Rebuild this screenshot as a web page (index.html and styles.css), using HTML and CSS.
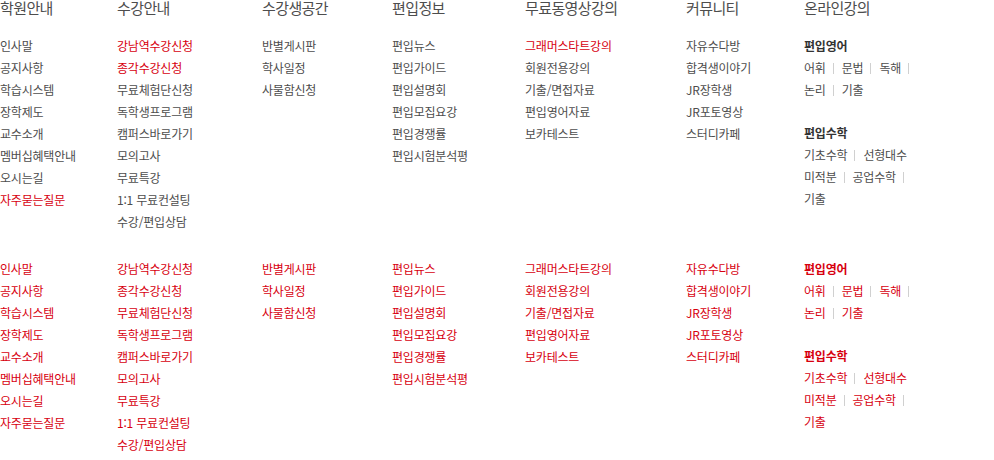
FILE: index.html
```html
<!DOCTYPE html>
<html lang="ko">
<head>
<meta charset="utf-8">
<link rel="stylesheet" href="styles.css">
</head>
<body>
<div class="sitemap">
  <div class="grid top">
    <div class="col"><h3 class="head">학원안내</h3>
      <ul class="list"><li>인사말</li><li>공지사항</li><li>학습시스템</li><li>장학제도</li><li>교수소개</li><li>멤버십혜택안내</li><li>오시는길</li><li class="red">자주묻는질문</li></ul></div>
    <div class="col"><h3 class="head">수강안내</h3>
      <ul class="list"><li class="red">강남역수강신청</li><li class="red">종각수강신청</li><li>무료체험단신청</li><li>독학생프로그램</li><li>캠퍼스바로가기</li><li>모의고사</li><li>무료특강</li><li>1:1 무료컨설팅</li><li>수강/편입상담</li></ul></div>
    <div class="col"><h3 class="head">수강생공간</h3>
      <ul class="list"><li>반별게시판</li><li>학사일정</li><li>사물함신청</li></ul></div>
    <div class="col"><h3 class="head">편입정보</h3>
      <ul class="list"><li>편입뉴스</li><li>편입가이드</li><li>편입설명회</li><li>편입모집요강</li><li>편입경쟁률</li><li>편입시험분석평</li></ul></div>
    <div class="col"><h3 class="head">무료동영상강의</h3>
      <ul class="list"><li class="red">그래머스타트강의</li><li>회원전용강의</li><li>기출/면접자료</li><li>편입영어자료</li><li>보카테스트</li></ul></div>
    <div class="col"><h3 class="head">커뮤니티</h3>
      <ul class="list"><li>자유수다방</li><li>합격생이야기</li><li>JR장학생</li><li>JR포토영상</li><li>스터디카페</li></ul></div>
    <div class="col"><h3 class="head">온라인강의</h3>
      <div class="group">
        <div class="gtitle">편입영어</div>
        <div class="gline"><span>어휘</span><i class="sep"></i><span>문법</span><i class="sep"></i><span>독해</span><i class="sep"></i></div>
        <div class="gline"><span>논리</span><i class="sep"></i><span>기출</span></div>
      </div>
      <div class="group">
        <div class="gtitle">편입수학</div>
        <div class="gline"><span>기초수학</span><i class="sep"></i><span>선형대수</span></div>
        <div class="gline"><span>미적분</span><i class="sep"></i><span>공업수학</span><i class="sep"></i></div>
        <div class="gline"><span>기출</span></div>
      </div>
    </div>
  </div>

  <div class="grid bottom allred">
    <div class="col">
      <ul class="list"><li>인사말</li><li>공지사항</li><li>학습시스템</li><li>장학제도</li><li>교수소개</li><li>멤버십혜택안내</li><li>오시는길</li><li>자주묻는질문</li></ul></div>
    <div class="col">
      <ul class="list"><li>강남역수강신청</li><li>종각수강신청</li><li>무료체험단신청</li><li>독학생프로그램</li><li>캠퍼스바로가기</li><li>모의고사</li><li>무료특강</li><li>1:1 무료컨설팅</li><li>수강/편입상담</li></ul></div>
    <div class="col">
      <ul class="list"><li>반별게시판</li><li>학사일정</li><li>사물함신청</li></ul></div>
    <div class="col">
      <ul class="list"><li>편입뉴스</li><li>편입가이드</li><li>편입설명회</li><li>편입모집요강</li><li>편입경쟁률</li><li>편입시험분석평</li></ul></div>
    <div class="col">
      <ul class="list"><li>그래머스타트강의</li><li>회원전용강의</li><li>기출/면접자료</li><li>편입영어자료</li><li>보카테스트</li></ul></div>
    <div class="col">
      <ul class="list"><li>자유수다방</li><li>합격생이야기</li><li>JR장학생</li><li>JR포토영상</li><li>스터디카페</li></ul></div>
    <div class="col">
      <div class="group">
        <div class="gtitle">편입영어</div>
        <div class="gline"><span>어휘</span><i class="sep"></i><span>문법</span><i class="sep"></i><span>독해</span><i class="sep"></i></div>
        <div class="gline"><span>논리</span><i class="sep"></i><span>기출</span></div>
      </div>
      <div class="group">
        <div class="gtitle">편입수학</div>
        <div class="gline"><span>기초수학</span><i class="sep"></i><span>선형대수</span></div>
        <div class="gline"><span>미적분</span><i class="sep"></i><span>공업수학</span><i class="sep"></i></div>
        <div class="gline"><span>기출</span></div>
      </div>
    </div>
  </div>
</div>
</body>
</html>
```

FILE: styles.css
```css
html, body {
  margin: 0;
  padding: 0;
  background: #fff;
}
body {
  font-family: "Noto Sans CJK KR", "Noto Sans", sans-serif;
  color: #4d4d4d;
}
.sitemap {
  width: 994px;
}
.grid {
  display: grid;
  grid-template-columns: 117px 145px 130px 133px 161px 118px auto;
}
.bottom {
  margin-top: 25px;
}
.head {
  margin: 0;
  font-size: 15px;
  line-height: 15px;
  font-weight: normal;
  letter-spacing: -0.6px;
  color: #4d4d4d;
  height: 35px;
}
.list {
  list-style: none;
  margin: 0;
  padding: 0;
}
.list li,
.gline,
.gtitle {
  font-size: 12px;
  line-height: 22px;
  height: 22px;
  letter-spacing: -0.2px;
  white-space: nowrap;
}
.red {
  color: #d7000f;
}
.allred,
.allred .gtitle {
  color: #d7000f;
}
.gtitle {
  font-weight: bold;
  color: #333;
}
.group + .group {
  margin-top: 21px;
}
.gline {
  display: flex;
  align-items: center;
}
.sep {
  display: inline-block;
  width: 1px;
  height: 11px;
  background: #d0d0d0;
  margin: 0 8px 0 7px;
}
```
